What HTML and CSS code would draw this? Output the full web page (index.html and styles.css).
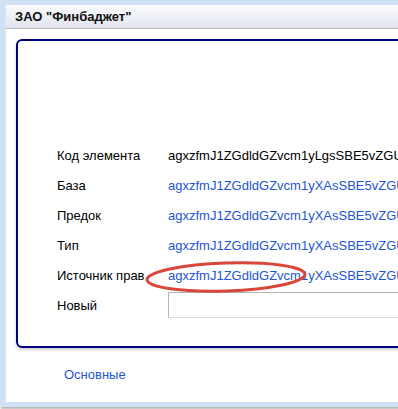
FILE: index.html
```html
<!DOCTYPE html>
<html lang="ru">
<head>
<meta charset="utf-8">
<title>ЗАО "Финбаджет"</title>
<link rel="stylesheet" href="styles.css">
</head>
<body>
<div class="frame">
  <div class="window">
    <div class="titlebar">ЗАО "Финбаджет"</div>
    <div class="content">
      <div class="panel">
        <div class="rows">
          <div class="row"><span class="label">Код элемента</span><span class="value">agxzfmJ1ZGdldGZvcm1yLgsSBE5vZGUYgICAgIDQrwoM</span></div>
          <div class="row"><span class="label">База</span><a class="value link" href="#">agxzfmJ1ZGdldGZvcm1yXAsSBE5vZGUYgICAgICAgAoM</a></div>
          <div class="row"><span class="label">Предок</span><a class="value link" href="#">agxzfmJ1ZGdldGZvcm1yXAsSBE5vZGUYgICAgICAgAoM</a></div>
          <div class="row"><span class="label">Тип</span><a class="value link" href="#">agxzfmJ1ZGdldGZvcm1yXAsSBE5vZGUYgICAgICAgAoM</a></div>
          <div class="row"><span class="label">Источник прав</span><a class="value link" href="#">agxzfmJ1ZGdldGZvcm1yXAsSBE5vZGUYgICAgICAgAoM</a></div>
          <div class="row"><span class="label">Новый</span><input class="field" type="text"></div>
        </div>
        <svg class="mark" width="170" height="40" viewBox="0 0 170 40"><ellipse cx="85" cy="20" rx="79" ry="14" fill="none" stroke="#d9463a" stroke-width="3" transform="rotate(-2 85 20)"/></svg>
      </div>
      <div class="tabs"><a class="tab" href="#">Основные</a></div>
    </div>
  </div>
</div>
</body>
</html>
```
FILE: styles.css
```css
html, body {
  margin: 0;
  padding: 0;
  background: #ffffff;
  overflow: hidden;
  width: 398px;
  height: 409px;
  font-family: "Liberation Sans", Arial, sans-serif;
  font-size: 13px;
}
.frame {
  width: 700px;
  height: 397px;
  padding: 5px 5px 5px 5px;
  background: #cfe1f3;
  box-shadow: 1px 2px 2px rgba(0,0,0,0.3);
}
.window {
  background: #ffffff;
  height: 397px;
  border-left: 1px solid #dde3ea;
  box-sizing: border-box;
}
.titlebar {
  height: 23px;
  line-height: 24px;
  padding-left: 9px;
  font-weight: bold;
  font-size: 13px;
  color: #111;
  background: linear-gradient(#fafbfd, #e1e4ee);
  border-bottom: 1px solid #b8b8b8;
}
.content {
  padding: 10px 0 0 10px;
}
.panel {
  position: relative;
  height: 305px;
  border: 2px solid #000080;
  border-radius: 6px;
  box-shadow: 0 2px 3px rgba(0,0,0,0.18);
  padding: 99px 0 0 39px;
  box-sizing: content-box;
  height: 206px;
}
.rows {
  display: flex;
  flex-direction: column;
}
.row {
  display: flex;
  align-items: center;
  height: 30px;
  white-space: nowrap;
}
.label {
  width: 111px;
  flex: none;
  color: #000;
}
.value {
  color: #000;
}
.link {
  color: #2456d3;
  text-decoration: none;
}
.field {
  width: 400px;
  height: 26px;
  box-sizing: border-box;
  margin: 0;
  border: 1px solid #b4b4b4;
  border-bottom-color: #dcdcdc;
  border-right-color: #cfcfcf;
  background: #fff;
}
.mark {
  position: absolute;
  left: 123px;
  top: 216px;
}
.tabs {
  padding: 19px 0 0 48px;
}
.tab {
  color: #2456d3;
  text-decoration: none;
  font-size: 13px;
}
```
